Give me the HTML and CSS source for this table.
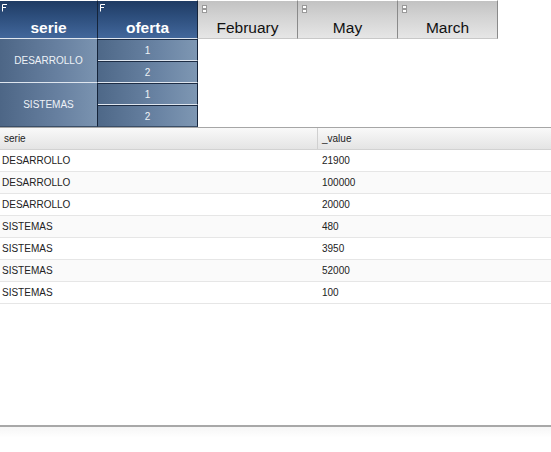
FILE: index.html
```html
<!DOCTYPE html>
<html>
<head>
<meta charset="utf-8">
<link rel="stylesheet" href="styles.css">
</head>
<body>
<div class="pivot">
  <div class="hd blue"><svg class="ico" width="6" height="8" viewBox="0 0 6 8"><path d="M0.5 0.5V7.5M0.5 0.5H5M0.5 3.5H4" stroke="#fff" stroke-width="1" fill="none"/></svg>serie</div>
  <div class="hd blue"><svg class="ico" width="6" height="8" viewBox="0 0 6 8"><path d="M0.5 0.5V7.5M0.5 0.5H5M0.5 3.5H4" stroke="#fff" stroke-width="1" fill="none"/></svg>oferta</div>
  <div class="hd gray"><svg class="ico gi" width="5" height="8" viewBox="0 0 5 8"><rect x="0.5" y="0.5" width="4" height="3" fill="#fff" stroke="#999"/><rect x="0.5" y="4.5" width="4" height="3" fill="#fff" stroke="#999"/></svg>February</div>
  <div class="hd gray"><svg class="ico gi" width="5" height="8" viewBox="0 0 5 8"><rect x="0.5" y="0.5" width="4" height="3" fill="#fff" stroke="#999"/><rect x="0.5" y="4.5" width="4" height="3" fill="#fff" stroke="#999"/></svg>May</div>
  <div class="hd gray"><svg class="ico gi" width="5" height="8" viewBox="0 0 5 8"><rect x="0.5" y="0.5" width="4" height="3" fill="#fff" stroke="#999"/><rect x="0.5" y="4.5" width="4" height="3" fill="#fff" stroke="#999"/></svg>March</div>

  <div class="cell rowspan r1">DESARROLLO</div>
  <div class="cell of">1</div>
  <div class="cell of">2</div>
  <div class="cell rowspan r2">SISTEMAS</div>
  <div class="cell of">1</div>
  <div class="cell of">2</div>
</div>

<div class="grid">
  <div class="ghead">
    <div class="c1">serie</div>
    <div class="c2">_value</div>
  </div>
  <div class="row"><div class="c1">DESARROLLO</div><div class="c2">21900</div></div>
  <div class="row alt"><div class="c1">DESARROLLO</div><div class="c2">100000</div></div>
  <div class="row"><div class="c1">DESARROLLO</div><div class="c2">20000</div></div>
  <div class="row alt"><div class="c1">SISTEMAS</div><div class="c2">480</div></div>
  <div class="row"><div class="c1">SISTEMAS</div><div class="c2">3950</div></div>
  <div class="row alt"><div class="c1">SISTEMAS</div><div class="c2">52000</div></div>
  <div class="row"><div class="c1">SISTEMAS</div><div class="c2">100</div></div>
</div>
<div class="foot"></div>
</body>
</html>
```

FILE: styles.css
```css
html, body {
  margin: 0;
  padding: 0;
  background: #fff;
  font-family: "Liberation Sans", Arial, sans-serif;
}

.pivot {
  display: grid;
  grid-template-columns: 98px 100px 100px 100px 100px;
  grid-template-rows: 39px 22px 22px 22px 22px;
  width: 498px;
}

.hd {
  position: relative;
  display: flex;
  align-items: flex-end;
  justify-content: center;
  padding-bottom: 2px;
  box-sizing: border-box;
  font-size: 15.5px;
  line-height: 17px;
}

.ico {
  position: absolute;
  left: 2px;
  top: 3px;
}

.gi {
  left: 4px;
  top: 4px;
}

.blue {
  color: #fff;
  font-weight: bold;
  background: linear-gradient(to bottom, #1f3b63 0%, #2c4d7b 40%, #42679b 100%);
  border-top: 1px solid #fff;
  border-right: 1px solid #15243a;
  border-bottom: 1px solid #dfe6ef;
}

.gray {
  color: #111;
  background: linear-gradient(to bottom, #c2c2c2 0%, #d2d2d2 40%, #e6e6e6 100%);
  border-top: 1px solid #fff;
  border-right: 1px solid #8a8a8a;
  border-bottom: 1px solid #c8c8c8;
}

.cell {
  display: flex;
  align-items: center;
  justify-content: center;
  box-sizing: border-box;
  font-size: 10px;
  color: #eef2f7;
  border-right: 1px solid #15243a;
  border-bottom: 1px solid #dfe6ef;
}

.rowspan {
  grid-column: 1;
  grid-row: span 2;
  background: linear-gradient(to right, #4d6686 0%, #6780a0 60%, #7a93b0 100%);
}

.r2 {
  border-bottom: 1px solid #3a4e68;
}

.of {
  grid-column: 2;
  background: linear-gradient(to right, #4e6888 0%, #6983a3 60%, #7e97b3 100%);
  border-top: 1px solid #1c2c44;
}

.of:last-child {
  border-bottom: 1px solid #3a4e68;
}

.grid {
  height: 298px;
  font-size: 10px;
  color: #222;
}

.ghead {
  display: flex;
  height: 23px;
  box-sizing: border-box;
  border-top: 1px solid #a6a6a6;
  border-bottom: 1px solid #d2d2d2;
  background: linear-gradient(to bottom, #f9f9f9, #e4e4e4);
}

.ghead .c1 {
  width: 318px;
  padding-left: 4px;
  box-sizing: border-box;
  border-right: 1px solid #d0d0d0;
  display: flex;
  align-items: center;
}

.ghead .c2 {
  padding-left: 4px;
  display: flex;
  align-items: center;
}

.row {
  display: flex;
  height: 22px;
  box-sizing: border-box;
  border-bottom: 1px solid #e6e6e6;
  align-items: center;
}

.row.alt {
  background: #fafafa;
}

.row .c1 {
  width: 318px;
  padding-left: 2px;
  box-sizing: border-box;
}

.row .c2 {
  padding-left: 4px;
}

.foot {
  height: 27px;
  border-top: 2px solid #a8a8a8;
  background: linear-gradient(to bottom, #f6f6f6, #fff 40%);
}
```
